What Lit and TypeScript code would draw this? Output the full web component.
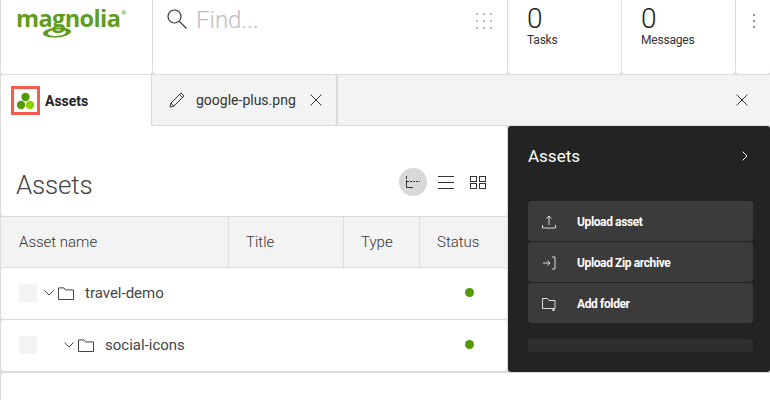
import { LitElement, html, css } from "lit";
import { customElement } from "lit/decorators.js";

const X = html`<svg viewBox="0 0 12 12" width="12" height="12" fill="none" stroke="#333" stroke-width="1"><path d="M.5.500l11 11M11.500.500l-11 11"/></svg>`;
const FOLDER = html`<svg class="folder" viewBox="0 0 16 13" width="16" height="13" fill="none" stroke="#444" stroke-width="1"><path d="M.5 12.500V.9h5.500l1.500 2h8v9.600z"/></svg>`;
const CHEV = html`<svg class="chev" viewBox="0 0 10 6" width="10" height="6" fill="none" stroke="#444" stroke-width="1"><path d="M.5.5L5 5 9.500.5"/></svg>`;

@customElement("app-root")
export class AppRoot extends LitElement {
  static styles = css`
    :host { display: block; width: 770px; height: 400px; overflow: hidden; background: #dcdcdc; font-family: Roboto, sans-serif; color: #333; }
    .top { display: flex; height: 74px; gap: 1px; padding-left: 1px; }
    .cell { background: #fff; border-radius: 0 0 3px 3px; }
    .logo { width: 151px; padding: 5px 0 0 15px; box-sizing: border-box; }
    .logo-text { position: relative; display: block; width: 112px; height: 34px; }
    .logo-name { font: bold 23.5px/26px "Open Sans", sans-serif; letter-spacing: -0.6px; color: #5f9e1c; }
    .reg { font-size: 6px; position: relative; top: -12px; letter-spacing: 0; margin-left: 1px; }
    .swoosh { position: absolute; left: 26px; top: 22px; }
    .search { width: 354px; display: flex; align-items: flex-start; padding: 9px 15px 0 14px; box-sizing: border-box; }
    .find { font-size: 24px; font-weight: 300; line-height: 28px; color: #bdbdbd; margin: -3px 0 0 9px; flex: 1; }
    .grid-dots { margin-top: 4px; }
    .stat { width: 113px; padding: 4px 0 0 19px; box-sizing: border-box; }
    .num { font-size: 28px; font-weight: 300; line-height: 29px; color: #222; }
    .lab { font-size: 12px; line-height: 14px; color: #333; letter-spacing: -0.2px; }
    .more { flex: 1; padding: 13px 0 0 17px; }
    .tabs { display: flex; height: 51px; margin-top: 1px; gap: 1px; padding-left: 1px; }
    .tab { display: flex; align-items: center; height: 50px; box-sizing: border-box; }
    .tab.active { width: 150px; height: 51px; background: #fff; padding-left: 10px; font-size: 14px; font-weight: 700; color: #222; border-radius: 3px 0 0 0; }
    .badge { width: 29px; height: 29px; border: 3px solid #fa5a4b; box-sizing: border-box; display: flex; align-items: center; justify-content: center; margin-right: 5px; }
    .tab.file { width: 184px; background: #f3f3f3; padding-left: 17px; font-size: 14px; color: #333; border-radius: 0 3px 3px 3px; }
    .tab.file .name { margin: 0 14px 0 11px; }
    .tab.rest { flex: 1; background: #f3f3f3; justify-content: flex-end; padding-right: 22px; margin-left: 1px; }
    .body { display: flex; gap: 1px; height: 246px; }
    .left { width: 506px; margin-left: 1px; display: flex; flex-direction: column; gap: 1px; }
    .title-bar { height: 90px; background: #fff; display: flex; align-items: flex-end; justify-content: space-between; padding: 0 21px 16px 15px; box-sizing: border-box; border-radius: 0 3px 3px 3px; }
    h1 { margin: 0; font-size: 26px; font-weight: 300; line-height: 30px; color: #444; letter-spacing: -0.2px; }
    .views { display: flex; align-items: center; margin-bottom: 4px; }
    .view { height: 28px; display: flex; align-items: center; justify-content: center; }
    .view.on { width: 28px; border-radius: 50%; background: #d8d8d8; margin-right: 11px; }
    .view.list { margin-right: 16px; }
    .thead { height: 50px; display: grid; grid-template-columns: 227px 114px 75px 1fr; gap: 1px; }
    .th { background: #f3f3f3; font-size: 15px; font-weight: 300; color: #333; line-height: 50px; padding-left: 18px; box-sizing: border-box; }
    .th.t2 { padding-left: 17px; }
    .row { height: 51px; background: #fff; display: flex; align-items: center; padding: 0 0 1px 18px; box-sizing: border-box; font-size: 15px; color: #444; border-radius: 3px; }
    .check { width: 18px; height: 18px; background: #f3f3f3; }
    .chev { margin-left: 7px; }
    .row.nest .chev { margin-left: 27px; }
    .folder { margin: 0 11px 0 4px; }
    .nm { flex: 1; }
    .dot { width: 9px; height: 9px; border-radius: 50%; background: #539a00; flex: none; margin: -2px 33px 0 0; }
    .panel { flex: 1; background: #232323; border-radius: 3px; padding: 20px 17px 0 20px; box-sizing: border-box; overflow: hidden; }
    .p-head { display: flex; align-items: center; justify-content: space-between; color: #fff; font-size: 17px; height: 20px; padding-right: 5px; }
    .actions { display: flex; flex-direction: column; gap: 1px; margin-top: 35px; }
    .act { height: 40px; padding-top: 1px; box-sizing: border-box; background: #3b3b3b; border-radius: 3px; display: flex; align-items: center; color: #fff; font-size: 12px; font-weight: 700; letter-spacing: -0.38px; }
    .act svg { margin: 0 21px 0 14px; flex: none; }
    .stub { height: 13px; background: #2e2e2e; border-radius: 3px 3px 0 0; margin-top: 16px; }
    .foot { height: 30px; background: #fff; margin: 1px 0 0 1px; border-radius: 3px 0 0 0; }
  `;

  render() {
    return html`
      <div class="top">
        <div class="cell logo">
          <div class="logo-text">
            <span class="logo-name">magnolia<span class="reg">®</span></span>
            <svg class="swoosh" viewBox="0 0 30 11" width="30" height="11"><path fill="#5f9e1c" fill-rule="evenodd" d="M1 6.500C1 3 9 .5 17 .5c7 0 12 1.500 12 4S22 10.500 14 10.500C6 10.500 1 9 1 6.500zm5 0C6 8 9 9 14 9c6 0 10-2 10-4.200C24 3.500 20 2.500 16 2.500 10 2.500 6 4.500 6 6.500z"/></svg>
          </div>
        </div>
        <div class="cell search">
          <svg viewBox="0 0 20 20" width="20" height="20" fill="none" stroke="#333" stroke-width="1.2"><circle cx="7.500" cy="7.500" r="6.500"/><path d="M12.300 12.300L19.500 19.500"/></svg>
          <div class="find">Find...</div>
          <svg class="grid-dots" viewBox="0 0 16 16" width="16" height="16" fill="#444"><circle cx="1" cy="1" r=".7"/><circle cx="8" cy="1" r=".7"/><circle cx="15" cy="1" r=".7"/><circle cx="1" cy="8" r=".7"/><circle cx="8" cy="8" r=".7"/><circle cx="15" cy="8" r=".7"/><circle cx="1" cy="15" r=".7"/><circle cx="8" cy="15" r=".7"/><circle cx="15" cy="15" r=".7"/></svg>
        </div>
        <div class="cell stat"><div class="num">0</div><div class="lab">Tasks</div></div>
        <div class="cell stat"><div class="num">0</div><div class="lab">Messages</div></div>
        <div class="cell more"><svg viewBox="0 0 2 14" width="2" height="14" fill="#666"><circle cx="1" cy="1" r="1"/><circle cx="1" cy="7" r="1"/><circle cx="1" cy="13" r="1"/></svg></div>
      </div>
      <div class="tabs">
        <div class="tab active">
          <div class="badge"><svg viewBox="0 0 19 18" width="19" height="18"><circle cx="9.500" cy="5" r="4.200" fill="#539a00"/><circle cx="5" cy="13" r="4.200" fill="#539a00"/><circle cx="14" cy="13" r="4.200" fill="#8ed100"/></svg></div>
          Assets
        </div>
        <div class="tab file">
          <svg viewBox="0 0 16 16" width="16" height="16" fill="none" stroke="#333" stroke-width="1"><path d="M1 15l1-4L12 1l3 3L5 14zM2 11l3 3M10.500 2.500l3 3"/></svg>
          <div class="name">google-plus.png</div>
          ${X}
        </div>
        <div class="tab rest">${X}</div>
      </div>
      <div class="body">
        <div class="left">
          <div class="title-bar">
            <h1>Assets</h1>
            <div class="views">
              <div class="view on"><svg viewBox="0 0 14 12" width="14" height="12" fill="none" stroke="#333" stroke-width="1"><path d="M.5 0v3M.5 4v7.500H7M1 5.500h2M4 5.500h2M7 5.500h2M10 5.500h2M13 5.500h1"/></svg></div>
              <div class="view list"><svg viewBox="0 0 16 13" width="16" height="13" fill="none" stroke="#333" stroke-width="1"><path d="M0 .5h16M0 6.500h16M0 12.500h16"/></svg></div>
              <div class="view"><svg viewBox="0 0 16 13" width="16" height="13" fill="none" stroke="#333" stroke-width="1"><rect x=".5" y=".5" width="6" height="5"/><rect x="9.500" y=".5" width="6" height="5"/><rect x=".5" y="7.500" width="6" height="5"/><rect x="9.500" y="7.500" width="6" height="5"/></svg></div>
            </div>
          </div>
          <div class="thead">
            <div class="th">Asset name</div>
            <div class="th t2">Title</div>
            <div class="th t2">Type</div>
            <div class="th t2">Status</div>
          </div>
          <div class="row"><div class="check"></div>${CHEV}${FOLDER}<span class="nm">travel-demo</span><div class="dot"></div></div>
          <div class="row nest"><div class="check"></div>${CHEV}${FOLDER}<span class="nm">social-icons</span><div class="dot"></div></div>
        </div>
        <div class="panel">
          <div class="p-head"><span>Assets</span><svg viewBox="0 0 6 10" width="6" height="10" fill="none" stroke="#fff" stroke-width="1"><path d="M.5.500L5 5 .5 9.500"/></svg></div>
          <div class="actions">
            <div class="act"><svg viewBox="0 0 14 14" width="14" height="14" fill="none" stroke="#ddd" stroke-width="1"><path d="M.5 10v3h13v-3M7 10V1M4.500 3.500L7 1l2.500 2.500"/></svg>Upload asset</div>
            <div class="act"><svg viewBox="0 0 14 14" width="14" height="14" fill="none" stroke="#ddd" stroke-width="1"><path d="M10 1h3v12h-3M1 7h7M5.500 4.500L8 7l-2.500 2.500"/></svg>Upload Zip archive</div>
            <div class="act"><svg viewBox="0 0 14 14" width="14" height="14" fill="none" stroke="#ddd" stroke-width="1"><path d="M.5 11.500V1.500h5l1.500 2h6v8zM11.500 11v3M10 13h3"/></svg>Add folder</div>
          </div>
          <div class="stub"></div>
        </div>
      </div>
      <div class="foot"></div>
    `;
  }
}
